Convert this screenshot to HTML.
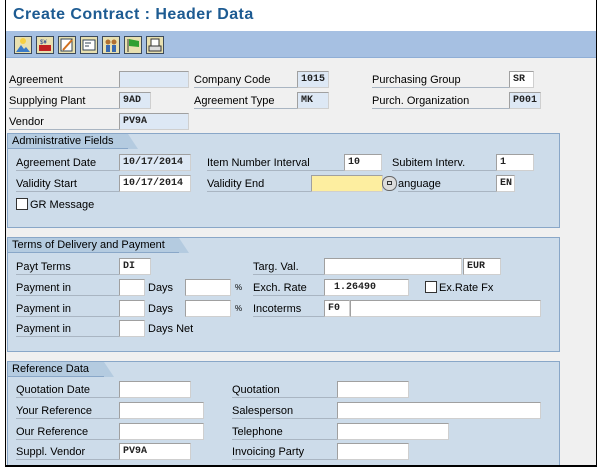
<!DOCTYPE html>
<html><head><style>
*{margin:0;padding:0;box-sizing:border-box}
body{width:600px;height:467px;background:#fff;position:relative;overflow:hidden;font-family:"Liberation Sans",Tahoma,sans-serif;font-size:11px;color:#000}
.a{position:absolute}
#frame{left:5px;top:0;width:592px;height:466px;border:1px solid #000;border-top:none;background:#f0f0f0}
#title{left:6px;top:0;width:590px;height:31px;background:#fff}
#title span{position:absolute;left:7px;top:6px;font-size:16px;font-weight:bold;color:#1d5b92;letter-spacing:0.45px}
#tb{left:6px;top:31px;width:590px;height:27px;background:#a6c0e2;border-bottom:1px solid #8faed6}
.btn{position:absolute;top:36px;width:18px;height:18px;background:#e8e0b0;border:1px solid #3c4a5a}
.panel{position:absolute;left:7px;width:553px;background:#cddcea;border:1px solid #89a7c8}
.tab{position:absolute;left:0;top:0;height:15px;background:#b4cbe0;padding-left:4px;line-height:15px;border-bottom:1px solid #89a7c8}
.tab:after{content:"";position:absolute;right:-10px;top:0;border-left:10px solid #b4cbe0;border-top:15px solid transparent}
.l{position:absolute;height:17px;line-height:18px;border-bottom:1px solid #a9b5c2;white-space:nowrap}
.l0{border-bottom:none}
.i{position:absolute;height:17px;background:#fff;border:1px solid #a0a0a0;border-bottom-color:#cfcfcf;border-right-color:#cfcfcf;font-family:"Liberation Mono",monospace;font-size:10px;font-weight:bold;color:#222;line-height:16px;padding-left:3px}
.ro{background:#dde8f5}
.y{background:#fdeea0}
.cb{position:absolute;width:12px;height:12px;border:1px solid #333;background:#fff}
</style></head><body>
<div class="a" id="frame"></div>
<div class="a" id="title"><span>Create Contract : Header Data</span></div>
<div class="a" id="tb"></div>
<div class="btn" style="left:14px"><svg width="16" height="16"><circle cx="8" cy="4" r="3" fill="#f7d040"/><path d="M1 15 L6 8 L9 12 L11 10 L15 15Z" fill="#3a7bc8"/></svg></div>
<div class="btn" style="left:36px"><svg width="16" height="16"><rect x="2" y="8" width="12" height="6" fill="#c02020"/><text x="3" y="7" font-size="6" fill="#1a3a8a" font-family="Liberation Sans">$¥</text></svg></div>
<div class="btn" style="left:58px"><svg width="16" height="16"><rect x="2" y="2" width="11" height="12" fill="#fff" stroke="#345"/><path d="M4 13 L13 3" stroke="#d07020" stroke-width="2"/></svg></div>
<div class="btn" style="left:80px"><svg width="16" height="16"><rect x="2" y="3" width="12" height="10" fill="#fff" stroke="#345"/><path d="M4 6h6M4 9h4" stroke="#345"/></svg></div>
<div class="btn" style="left:102px"><svg width="16" height="16"><circle cx="5" cy="5" r="2.5" fill="#b07030"/><circle cx="11" cy="5" r="2.5" fill="#b07030"/><rect x="3" y="8" width="4" height="7" fill="#3a6ab0"/><rect x="9" y="8" width="4" height="7" fill="#3a6ab0"/></svg></div>
<div class="btn" style="left:124px"><svg width="16" height="16"><path d="M3 15V2" stroke="#333"/><path d="M4 2 L14 4 L14 10 L4 9Z" fill="#30a030"/></svg></div>
<div class="btn" style="left:146px"><svg width="16" height="16"><rect x="4" y="2" width="8" height="7" fill="#fff" stroke="#333"/><rect x="2" y="9" width="12" height="5" fill="#ddd" stroke="#333"/></svg></div>

<div class="l" style="left:9px;top:71px;width:110px">Agreement</div><div class="i ro" style="left:119px;top:71px;width:70px"></div>
<div class="l" style="left:194px;top:71px;width:103px">Company Code</div><div class="i ro" style="left:297px;top:71px;width:32px">1015</div>
<div class="l" style="left:372px;top:71px;width:137px">Purchasing Group</div><div class="i" style="left:509px;top:71px;width:25px">SR</div>
<div class="l" style="left:9px;top:92px;width:110px">Supplying Plant</div><div class="i ro" style="left:119px;top:92px;width:32px">9AD</div>
<div class="l" style="left:194px;top:92px;width:103px">Agreement Type</div><div class="i ro" style="left:297px;top:92px;width:32px">MK</div>
<div class="l" style="left:372px;top:92px;width:137px">Purch. Organization</div><div class="i ro" style="left:509px;top:92px;width:32px">P001</div>
<div class="l" style="left:9px;top:113px;width:110px">Vendor</div><div class="i ro" style="left:119px;top:113px;width:70px">PV9A</div>

<div class="panel" style="top:133px;height:95px"><div class="tab" style="width:120px">Administrative Fields</div></div>
<div class="l" style="left:16px;top:154px;width:103px">Agreement Date</div><div class="i ro" style="left:119px;top:154px;width:72px">10/17/2014</div>
<div class="l" style="left:207px;top:154px;width:137px">Item Number Interval</div><div class="i" style="left:344px;top:154px;width:38px">10</div>
<div class="l" style="left:392px;top:154px;width:104px">Subitem Interv.</div><div class="i" style="left:496px;top:154px;width:38px">1</div>
<div class="l" style="left:16px;top:175px;width:103px">Validity Start</div><div class="i" style="left:119px;top:175px;width:72px">10/17/2014</div>
<div class="l" style="left:207px;top:175px;width:104px">Validity End</div><div class="i y" style="left:311px;top:175px;width:72px"></div>
<div class="a" style="left:382px;top:176px;width:15px;height:15px;border-radius:7px;background:#dcdcdc;border:1px solid #666"></div>
<div class="a" style="left:387px;top:181px;width:5px;height:4px;border:1px solid #333"></div>
<div class="l" style="left:398px;top:175px;width:98px">anguage</div><div class="i" style="left:496px;top:175px;width:19px">EN</div>
<div class="cb" style="left:16px;top:198px"></div><div class="l l0" style="left:30px;top:196px">GR Message</div>

<div class="panel" style="top:237px;height:115px"><div class="tab" style="width:171px">Terms of Delivery and Payment</div></div>
<div class="l" style="left:16px;top:258px;width:103px">Payt Terms</div><div class="i" style="left:119px;top:258px;width:32px">DI</div>
<div class="l" style="left:253px;top:258px;width:71px">Targ. Val.</div><div class="i" style="left:324px;top:258px;width:138px"></div><div class="i" style="left:463px;top:258px;width:38px">EUR</div>
<div class="l" style="left:16px;top:279px;width:103px">Payment in</div><div class="i" style="left:119px;top:279px;width:26px"></div><div class="l l0" style="left:148px;top:279px">Days</div><div class="i" style="left:185px;top:279px;width:46px"></div><div class="l l0" style="left:235px;top:279px;font-size:8px">%</div>
<div class="l" style="left:253px;top:279px;width:71px">Exch. Rate</div><div class="i" style="left:324px;top:279px;width:85px">&nbsp;1.26490</div>
<div class="cb" style="left:425px;top:281px"></div><div class="l l0" style="left:439px;top:279px">Ex.Rate Fx</div>
<div class="l" style="left:16px;top:300px;width:103px">Payment in</div><div class="i" style="left:119px;top:300px;width:26px"></div><div class="l l0" style="left:148px;top:300px">Days</div><div class="i" style="left:185px;top:300px;width:46px"></div><div class="l l0" style="left:235px;top:300px;font-size:8px">%</div>
<div class="l" style="left:253px;top:300px;width:71px">Incoterms</div><div class="i" style="left:324px;top:300px;width:26px">F0</div><div class="i" style="left:350px;top:300px;width:191px"></div>
<div class="l" style="left:16px;top:320px;width:103px">Payment in</div><div class="i" style="left:119px;top:320px;width:26px"></div><div class="l l0" style="left:148px;top:320px">Days Net</div>

<div class="panel" style="top:361px;height:105px;border-bottom:none"><div class="tab" style="width:96px">Reference Data</div></div>
<div class="l" style="left:16px;top:381px;width:103px">Quotation Date</div><div class="i" style="left:119px;top:381px;width:72px"></div>
<div class="l" style="left:232px;top:381px;width:105px">Quotation</div><div class="i" style="left:337px;top:381px;width:72px"></div>
<div class="l" style="left:16px;top:402px;width:103px">Your Reference</div><div class="i" style="left:119px;top:402px;width:85px"></div>
<div class="l" style="left:232px;top:402px;width:105px">Salesperson</div><div class="i" style="left:337px;top:402px;width:204px"></div>
<div class="l" style="left:16px;top:423px;width:103px">Our Reference</div><div class="i" style="left:119px;top:423px;width:85px"></div>
<div class="l" style="left:232px;top:423px;width:105px">Telephone</div><div class="i" style="left:337px;top:423px;width:112px"></div>
<div class="l" style="left:16px;top:443px;width:103px">Suppl. Vendor</div><div class="i" style="left:119px;top:443px;width:72px">PV9A</div>
<div class="l" style="left:232px;top:443px;width:105px">Invoicing Party</div><div class="i" style="left:337px;top:443px;width:72px"></div>
<div class="a" style="left:5px;top:465px;width:592px;height:2px;background:#000"></div>
</body></html>
